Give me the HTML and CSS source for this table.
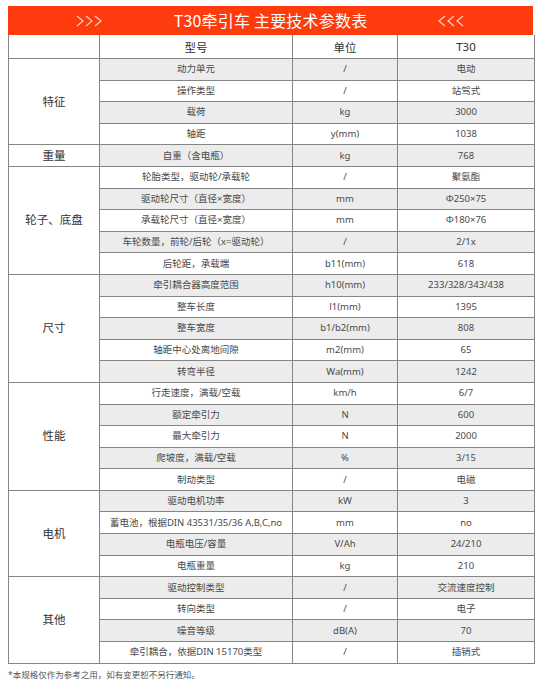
FILE: index.html
```html
<!DOCTYPE html>
<html lang="zh">
<head>
<meta charset="utf-8">
<title>T30牵引车 主要技术参数表</title>
<link rel="stylesheet" href="styles.css">
</head>
<body>
<div class="sheet">
  <div class="banner">
    <svg class="chev" width="28" height="12" viewBox="0 0 28 12"><polyline points="1,1 7,6 1,11" /><polyline points="10,1 16,6 10,11" /><polyline points="19,1 25,6 19,11" /></svg>
    <span class="title">T30牵引车 主要技术参数表</span>
    <svg class="chev" width="28" height="12" viewBox="0 0 28 12"><polyline points="8,1 2,6 8,11" /><polyline points="17,1 11,6 17,11" /><polyline points="26,1 20,6 26,11" /></svg>
  </div>
  <table class="spec">
    <colgroup><col class="c1"><col class="c2"><col class="c3"><col class="c4"></colgroup>
    <thead>
      <tr class="head"><th></th><th>型号</th><th>单位</th><th>T30</th></tr>
    </thead>
    <tbody>
      <tr class="g"><td class="grp" rowspan="4">特征</td><td>动力单元</td><td>/</td><td>电动</td></tr>
      <tr><td>操作类型</td><td>/</td><td>站驾式</td></tr>
      <tr class="g"><td>载荷</td><td>kg</td><td>3000</td></tr>
      <tr><td>轴距</td><td>y(mm)</td><td>1038</td></tr>
      <tr class="g"><td class="grp">重量</td><td>自重（含电瓶）</td><td>kg</td><td>768</td></tr>
      <tr><td class="grp" rowspan="5">轮子、底盘</td><td>轮胎类型，驱动轮/承载轮</td><td>/</td><td>聚氨酯</td></tr>
      <tr class="g"><td>驱动轮尺寸（直径×宽度）</td><td>mm</td><td>Φ250×75</td></tr>
      <tr><td>承载轮尺寸（直径×宽度）</td><td>mm</td><td>Φ180×76</td></tr>
      <tr class="g"><td>车轮数量，前轮/后轮（x=驱动轮）</td><td>/</td><td>2/1x</td></tr>
      <tr><td>后轮距，承载端</td><td>b11(mm)</td><td>618</td></tr>
      <tr class="g"><td class="grp" rowspan="5">尺寸</td><td>牵引耦合器高度范围</td><td>h10(mm)</td><td>233/328/343/438</td></tr>
      <tr><td>整车长度</td><td>l1(mm)</td><td>1395</td></tr>
      <tr class="g"><td>整车宽度</td><td>b1/b2(mm)</td><td>808</td></tr>
      <tr><td>轴距中心处离地间隙</td><td>m2(mm)</td><td>65</td></tr>
      <tr class="g"><td>转弯半径</td><td>Wa(mm)</td><td>1242</td></tr>
      <tr><td class="grp" rowspan="5">性能</td><td>行走速度，满载/空载</td><td>km/h</td><td>6/7</td></tr>
      <tr class="g"><td>额定牵引力</td><td>N</td><td>600</td></tr>
      <tr><td>最大牵引力</td><td>N</td><td>2000</td></tr>
      <tr class="g"><td>爬坡度，满载/空载</td><td>%</td><td>3/15</td></tr>
      <tr><td>制动类型</td><td>/</td><td>电磁</td></tr>
      <tr class="g"><td class="grp" rowspan="4">电机</td><td>驱动电机功率</td><td>kW</td><td>3</td></tr>
      <tr><td>蓄电池，根据DIN 43531/35/36 A,B,C,no</td><td>mm</td><td>no</td></tr>
      <tr class="g"><td>电瓶电压/容量</td><td>V/Ah</td><td>24/210</td></tr>
      <tr><td>电瓶重量</td><td>kg</td><td>210</td></tr>
      <tr class="g"><td class="grp" rowspan="4">其他</td><td>驱动控制类型</td><td>/</td><td>交流速度控制</td></tr>
      <tr><td>转向类型</td><td>/</td><td>电子</td></tr>
      <tr class="g"><td>噪音等级</td><td>dB(A)</td><td>70</td></tr>
      <tr><td>牵引耦合，依据DIN 15170类型</td><td>/</td><td>插销式</td></tr>
    </tbody>
  </table>
  <p class="note">*本规格仅作为参考之用，如有变更恕不另行通知。</p>
</div>
</body>
</html>
```
FILE: styles.css
```css
html, body {
  margin: 0;
  padding: 0;
  background: #ffffff;
}
body {
  font-family: "Noto Sans", "Noto Sans CJK SC", "Liberation Sans", sans-serif;
  color: #4a4a4a;
}
.sheet {
  width: 525px;
  padding: 6px 0 0 8px;
}
.banner {
  height: 29px;
  background: #fe3b0c;
  display: flex;
  align-items: center;
  justify-content: space-between;
  padding: 0 68px 0 68px;
  color: #ffffff;
}
.title {
  font-family: "Noto Sans CJK SC", sans-serif;
  font-size: 16px;
  line-height: 29px;
  letter-spacing: 0.2px;
}
.chev polyline {
  fill: none;
  stroke: #ffd9cc;
  stroke-width: 1.1;
}
.spec {
  width: 526px;
  border-collapse: collapse;
  table-layout: fixed;
  font-size: 9.5px;
}
.c1 { width: 91px; }
.c2 { width: 193px; }
.c3 { width: 105px; }
.c4 { width: 137px; }
.spec th, .spec td {
  border: 1px solid #858585;
  text-align: center;
  padding: 0;
  white-space: nowrap;
  overflow: hidden;
}
.spec th {
  font-weight: normal;
  font-size: 11.5px;
  height: 23px;
  color: #333333;
  border-top: none;
}
.spec td {
  height: 20.6px;
  line-height: 12px;
}
.spec tr.g td {
  background: #ececec;
}
.spec tr.g td.grp, .spec td.grp {
  background: #ffffff;
  font-size: 11.5px;
  color: #333333;
}
.note {
  margin: 4px 0 0 0;
  font-size: 8.5px;
  color: #555555;
}
```
